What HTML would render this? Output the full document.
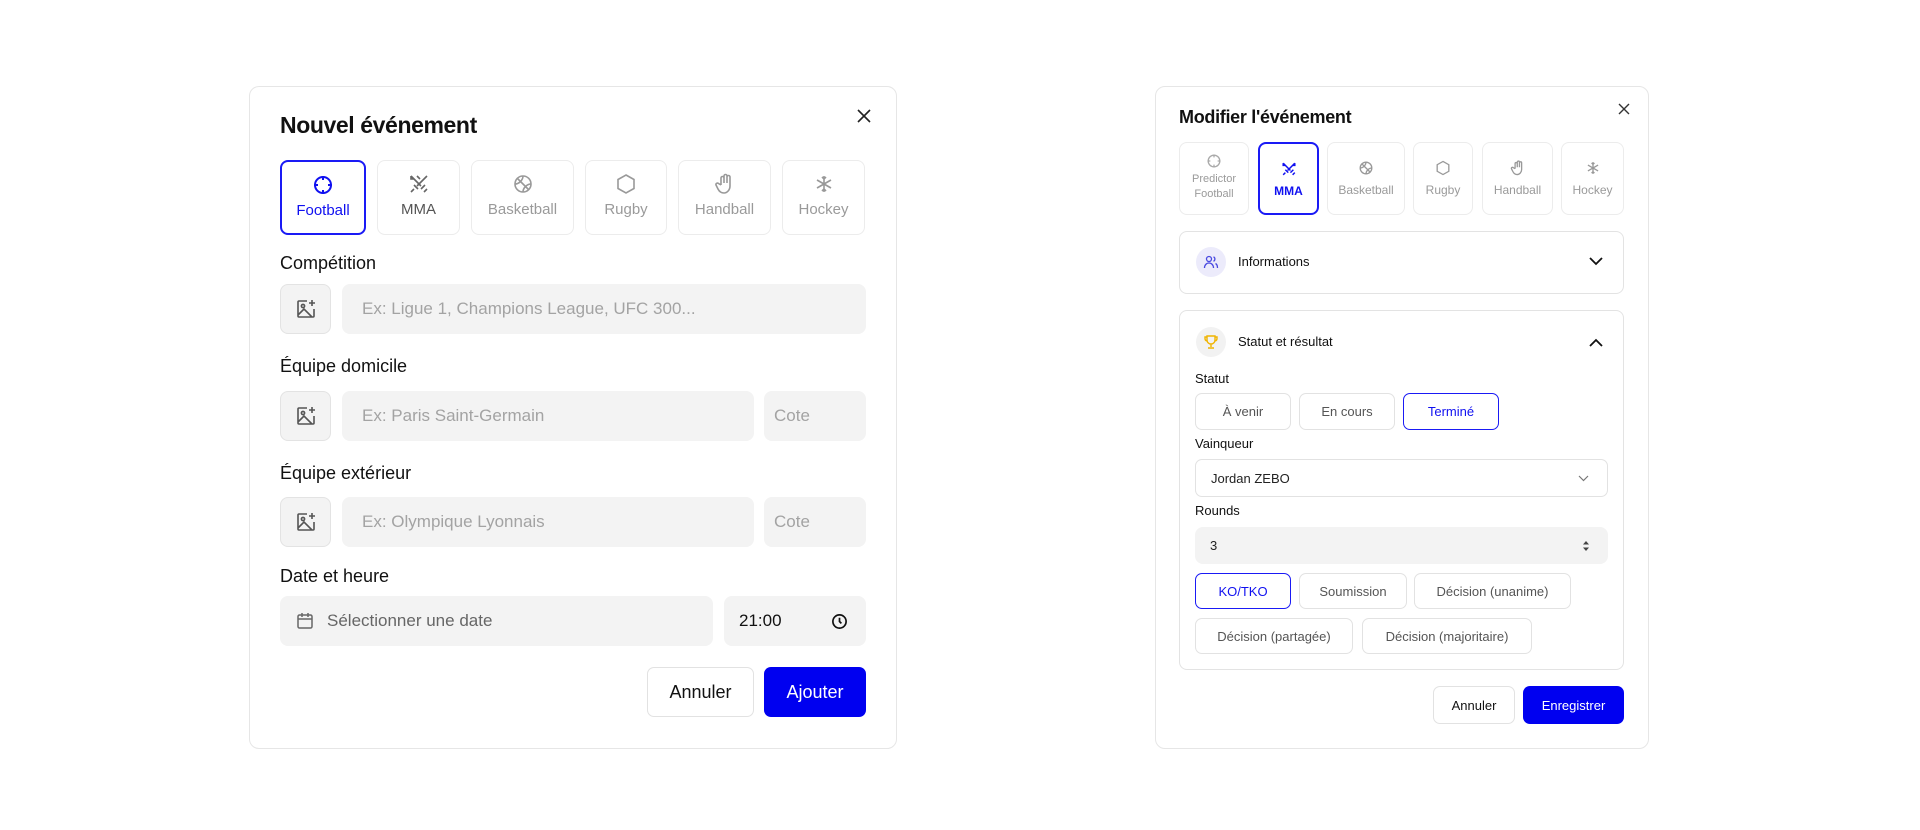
<!DOCTYPE html>
<html><head><meta charset="utf-8"><style>
*{box-sizing:border-box;margin:0;padding:0}
body{width:1920px;height:830px;background:#fff;position:relative;font-family:"Liberation Sans","DejaVu Sans",sans-serif;color:#111;overflow:hidden}
.a{position:absolute}
.modal{position:absolute;border:1.5px solid #e6e6e6;border-radius:10px;background:#fff}
.tile{position:absolute;border:1.5px solid #ececec;border-radius:8px;text-align:center;color:#9a9a9a}
.tile.on{border:2px solid #1a1af5;color:#1010f0}
.tile svg{display:block;margin:0 auto}
.in{position:absolute;background:#f3f3f3;border-radius:8px;color:#a3a3a3;display:flex;align-items:center}
.lbl{position:absolute;font-size:18px;color:#111}
.btn{position:absolute;border:1.5px solid #e2e2e2;border-radius:7px;display:flex;align-items:center;justify-content:center;background:#fff;color:#555}
.btn.on{border:1.5px solid #1a1af5;color:#1010f0}
.pri{background:#0000f0;color:#fff;border:none}
</style></head><body>

<!-- LEFT MODAL -->
<div class="modal" style="left:249px;top:86px;width:648px;height:663px"></div>
<div class="a" style="left:280px;top:112px;font-size:23px;font-weight:bold;letter-spacing:-0.4px">Nouvel événement</div>
<svg class="a" style="left:856px;top:108px" width="16" height="16" viewBox="0 0 16 16"><path d="M2 2L14 14M14 2L2 14" stroke="#222" stroke-width="1.6"/></svg>

<div class="tile on" style="left:280px;top:160px;width:86px;height:75px"><svg style="margin-top:12px" width="22" height="22" viewBox="0 0 22 22" fill="none" stroke="#1010f0" stroke-width="2"><circle cx="11" cy="11" r="8"/><path d="M11 2v4M11 16v4M2 11h4M16 11h4"/></svg><div style="font-size:15px;margin-top:6px">Football</div></div>
<div class="tile" style="left:377px;top:160px;width:83px;height:75px;color:#555"><svg style="margin-top:12px" width="22" height="22" viewBox="0 0 22 22" fill="none" stroke="#666" stroke-width="1.6"><path d="M3 3l10 10M13 16l4-4M16 19l3-3M19 3L9 13M6 12l4 4M3 19l3-3M9 3l3 3M3 3v3h3"/></svg><div style="font-size:15px;margin-top:6px">MMA</div></div>
<div class="tile" style="left:471px;top:160px;width:103px;height:75px"><svg style="margin-top:12px" width="22" height="22" viewBox="0 0 22 22" fill="none" stroke="#999" stroke-width="1.6"><circle cx="11" cy="11" r="8"/><path d="M5 5l12 12M3 11c4 0 8-4 8-8M11 19c0-4 4-8 8-8"/></svg><div style="font-size:15px;margin-top:6px">Basketball</div></div>
<div class="tile" style="left:585px;top:160px;width:82px;height:75px"><svg style="margin-top:12px" width="22" height="22" viewBox="0 0 22 22" fill="none" stroke="#999" stroke-width="1.6"><path d="M11 2l8 4.5v9L11 20l-8-4.5v-9z"/></svg><div style="font-size:15px;margin-top:6px">Rugby</div></div>
<div class="tile" style="left:678px;top:160px;width:93px;height:75px"><svg style="margin-top:12px" width="22" height="22" viewBox="0 0 22 22" fill="none" stroke="#999" stroke-width="1.6"><path d="M7 12V5a1.5 1.5 0 013 0v5V3a1.5 1.5 0 013 0v7V4a1.5 1.5 0 013 0v9c0 4-3 7-6 7-3 0-5-2-6-4l-2-4a1.5 1.5 0 012.5-1.5L7 12"/></svg><div style="font-size:15px;margin-top:6px">Handball</div></div>
<div class="tile" style="left:782px;top:160px;width:83px;height:75px"><svg style="margin-top:12px" width="22" height="22" viewBox="0 0 22 22" fill="none" stroke="#999" stroke-width="1.6"><path d="M11 3v16M4 7l14 8M18 7L4 15M9 4l2 2 2-2M9 18l2-2 2 2"/></svg><div style="font-size:15px;margin-top:6px">Hockey</div></div>

<div class="lbl" style="left:280px;top:253px">Compétition</div>
<div class="in" style="left:280px;top:284px;width:51px;height:50px;border:1.5px solid #e3e3e3;justify-content:center"><svg width="22" height="22" viewBox="0 0 22 22" fill="none" stroke="#555" stroke-width="1.6"><path d="M12 3H4a1 1 0 00-1 1v14a1 1 0 001 1h14a1 1 0 001-1v-7M17 2v6M14 5h6M3 17l6-6 8 8"/><circle cx="8" cy="8" r="1.6"/></svg></div>
<div class="in" style="left:342px;top:284px;width:524px;height:50px;padding-left:20px;font-size:17px">Ex: Ligue 1, Champions League, UFC 300...</div>

<div class="lbl" style="left:280px;top:356px">Équipe domicile</div>
<div class="in" style="left:280px;top:391px;width:51px;height:50px;border:1.5px solid #e3e3e3;justify-content:center"><svg width="22" height="22" viewBox="0 0 22 22" fill="none" stroke="#555" stroke-width="1.6"><path d="M12 3H4a1 1 0 00-1 1v14a1 1 0 001 1h14a1 1 0 001-1v-7M17 2v6M14 5h6M3 17l6-6 8 8"/><circle cx="8" cy="8" r="1.6"/></svg></div>
<div class="in" style="left:342px;top:391px;width:412px;height:50px;padding-left:20px;font-size:17px">Ex: Paris Saint-Germain</div>
<div class="in" style="left:764px;top:391px;width:102px;height:50px;padding-left:10px;font-size:17px">Cote</div>

<div class="lbl" style="left:280px;top:463px">Équipe extérieur</div>
<div class="in" style="left:280px;top:497px;width:51px;height:50px;border:1.5px solid #e3e3e3;justify-content:center"><svg width="22" height="22" viewBox="0 0 22 22" fill="none" stroke="#555" stroke-width="1.6"><path d="M12 3H4a1 1 0 00-1 1v14a1 1 0 001 1h14a1 1 0 001-1v-7M17 2v6M14 5h6M3 17l6-6 8 8"/><circle cx="8" cy="8" r="1.6"/></svg></div>
<div class="in" style="left:342px;top:497px;width:412px;height:50px;padding-left:20px;font-size:17px">Ex: Olympique Lyonnais</div>
<div class="in" style="left:764px;top:497px;width:102px;height:50px;padding-left:10px;font-size:17px">Cote</div>

<div class="lbl" style="left:280px;top:566px">Date et heure</div>
<div class="in" style="left:280px;top:596px;width:433px;height:50px;padding-left:15px;font-size:17px;color:#666"><svg width="20" height="20" viewBox="0 0 20 20" fill="none" stroke="#666" stroke-width="1.5"><rect x="3" y="4" width="14" height="13" rx="1.5"/><path d="M3 8h14M7 2v4M13 2v4"/></svg><span style="margin-left:12px">Sélectionner une date</span></div>
<div class="in" style="left:724px;top:596px;width:142px;height:50px;padding-left:15px;font-size:17px;color:#111">21:00<svg style="position:absolute;right:18px" width="17" height="17" viewBox="0 0 18 18" fill="none" stroke="#111" stroke-width="1.8"><circle cx="9" cy="9" r="7"/><path d="M9 5v4l2 2"/></svg></div>

<div class="btn" style="left:647px;top:667px;width:107px;height:50px;font-size:18px;color:#111">Annuler</div>
<div class="btn pri" style="left:764px;top:667px;width:102px;height:50px;font-size:18px">Ajouter</div>

<!-- RIGHT MODAL -->
<div class="modal" style="left:1155px;top:86px;width:494px;height:663px"></div>
<div class="a" style="left:1179px;top:107px;font-size:18px;font-weight:bold;letter-spacing:-0.3px">Modifier l'événement</div>
<svg class="a" style="left:1618px;top:103px" width="12" height="12" viewBox="0 0 12 12"><path d="M1 1L11 11M11 1L1 11" stroke="#333" stroke-width="1.4"/></svg>

<div class="tile" style="left:1179px;top:142px;width:70px;height:73px"><svg style="margin-top:10px" width="16" height="16" viewBox="0 0 22 22" fill="none" stroke="#aaa" stroke-width="1.8"><circle cx="11" cy="11" r="8"/><path d="M11 2v4M11 16v4M2 11h4M16 11h4"/></svg><div style="font-size:11px;margin-top:3px;line-height:15px">Predictor<br>Football</div></div>
<div class="tile on" style="left:1258px;top:142px;width:61px;height:73px"><svg style="margin-top:17px" width="16" height="16" viewBox="0 0 22 22" fill="none" stroke="#1010f0" stroke-width="2"><path d="M3 3l10 10M13 16l4-4M16 19l3-3M19 3L9 13M6 12l4 4M3 19l3-3M3 3v3h3M19 3v3h-3"/></svg><div style="font-size:12px;margin-top:7px;font-weight:bold">MMA</div></div>
<div class="tile" style="left:1327px;top:142px;width:78px;height:73px"><svg style="margin-top:17px" width="16" height="16" viewBox="0 0 22 22" fill="none" stroke="#999" stroke-width="1.8"><circle cx="11" cy="11" r="8"/><path d="M5 5l12 12M3 11c4 0 8-4 8-8M11 19c0-4 4-8 8-8"/></svg><div style="font-size:12px;margin-top:7px">Basketball</div></div>
<div class="tile" style="left:1413px;top:142px;width:60px;height:73px"><svg style="margin-top:17px" width="16" height="16" viewBox="0 0 22 22" fill="none" stroke="#999" stroke-width="1.8"><path d="M11 2l8 4.5v9L11 20l-8-4.5v-9z"/></svg><div style="font-size:12px;margin-top:7px">Rugby</div></div>
<div class="tile" style="left:1482px;top:142px;width:71px;height:73px"><svg style="margin-top:17px" width="16" height="16" viewBox="0 0 22 22" fill="none" stroke="#999" stroke-width="1.8"><path d="M7 12V5a1.5 1.5 0 013 0v5V3a1.5 1.5 0 013 0v7V4a1.5 1.5 0 013 0v9c0 4-3 7-6 7-3 0-5-2-6-4l-2-4a1.5 1.5 0 012.5-1.5L7 12"/></svg><div style="font-size:12px;margin-top:7px">Handball</div></div>
<div class="tile" style="left:1561px;top:142px;width:63px;height:73px"><svg style="margin-top:17px" width="16" height="16" viewBox="0 0 22 22" fill="none" stroke="#999" stroke-width="1.8"><path d="M11 3v16M4 7l14 8M18 7L4 15M9 4l2 2 2-2M9 18l2-2 2 2"/></svg><div style="font-size:12px;margin-top:7px">Hockey</div></div>

<div class="a" style="left:1179px;top:231px;width:445px;height:63px;border:1.5px solid #e3e3e3;border-radius:8px"></div>
<div class="a" style="left:1196px;top:247px;width:30px;height:30px;border-radius:50%;background:#ecebfb"></div>
<svg class="a" style="left:1203px;top:254px" width="16" height="16" viewBox="0 0 16 16" fill="none" stroke="#4a4ae0" stroke-width="1.3"><circle cx="6" cy="5" r="2.5"/><path d="M1.5 14c0-3 2-5 4.5-5s4.5 2 4.5 5M10.5 2.8a2.5 2.5 0 010 4.5M12.5 9.5c1.3.7 2 2.3 2 4.5"/></svg>
<div class="a" style="left:1238px;top:254px;font-size:13px">Informations</div>
<svg class="a" style="left:1589px;top:257px" width="14" height="9" viewBox="0 0 14 9"><path d="M1 1l6 6 6-6" fill="none" stroke="#111" stroke-width="1.8"/></svg>

<div class="a" style="left:1179px;top:310px;width:445px;height:360px;border:1.5px solid #e3e3e3;border-radius:8px"></div>
<div class="a" style="left:1196px;top:327px;width:30px;height:30px;border-radius:50%;background:#f2f2f2"></div>
<svg class="a" style="left:1203px;top:334px" width="16" height="16" viewBox="0 0 16 16" fill="none" stroke="#f0b400" stroke-width="1.4"><path d="M4 2h8v4a4 4 0 01-8 0zM4 3H2v1.5A2.5 2.5 0 004 7M12 3h2v1.5A2.5 2.5 0 0112 7M8 10v3M5 14h6"/></svg>
<div class="a" style="left:1238px;top:334px;font-size:13px">Statut et résultat</div>
<svg class="a" style="left:1589px;top:338px" width="14" height="9" viewBox="0 0 14 9"><path d="M1 8l6-6 6 6" fill="none" stroke="#111" stroke-width="1.8"/></svg>

<div class="a" style="left:1195px;top:371px;font-size:13px">Statut</div>
<div class="btn" style="left:1195px;top:393px;width:96px;height:37px;font-size:13px">À venir</div>
<div class="btn" style="left:1299px;top:393px;width:96px;height:37px;font-size:13px">En cours</div>
<div class="btn on" style="left:1403px;top:393px;width:96px;height:37px;font-size:13px">Terminé</div>

<div class="a" style="left:1195px;top:436px;font-size:13px">Vainqueur</div>
<div class="btn" style="left:1195px;top:459px;width:413px;height:38px;font-size:13px;justify-content:flex-start;padding-left:15px;color:#222">Jordan ZEBO<svg style="position:absolute;right:18px" width="11" height="7" viewBox="0 0 11 7"><path d="M1 1l4.5 4.5L10 1" fill="none" stroke="#777" stroke-width="1.2"/></svg></div>

<div class="a" style="left:1195px;top:503px;font-size:13px">Rounds</div>
<div class="in" style="left:1195px;top:527px;width:413px;height:37px;padding-left:15px;font-size:13px;color:#222">3<svg style="position:absolute;right:18px" width="8" height="12" viewBox="0 0 8 12"><path d="M1 4.5L4 1l3 3.5zM1 7.5L4 11l3-3.5z" fill="#444"/></svg></div>

<div class="btn on" style="left:1195px;top:573px;width:96px;height:36px;font-size:13px">KO/TKO</div>
<div class="btn" style="left:1299px;top:573px;width:108px;height:36px;font-size:13px">Soumission</div>
<div class="btn" style="left:1414px;top:573px;width:157px;height:36px;font-size:13px">Décision (unanime)</div>
<div class="btn" style="left:1195px;top:618px;width:158px;height:36px;font-size:13px">Décision (partagée)</div>
<div class="btn" style="left:1362px;top:618px;width:170px;height:36px;font-size:13px">Décision (majoritaire)</div>

<div class="btn" style="left:1433px;top:686px;width:82px;height:38px;font-size:13px;color:#111">Annuler</div>
<div class="btn pri" style="left:1523px;top:686px;width:101px;height:38px;font-size:13px">Enregistrer</div>

</body></html>
